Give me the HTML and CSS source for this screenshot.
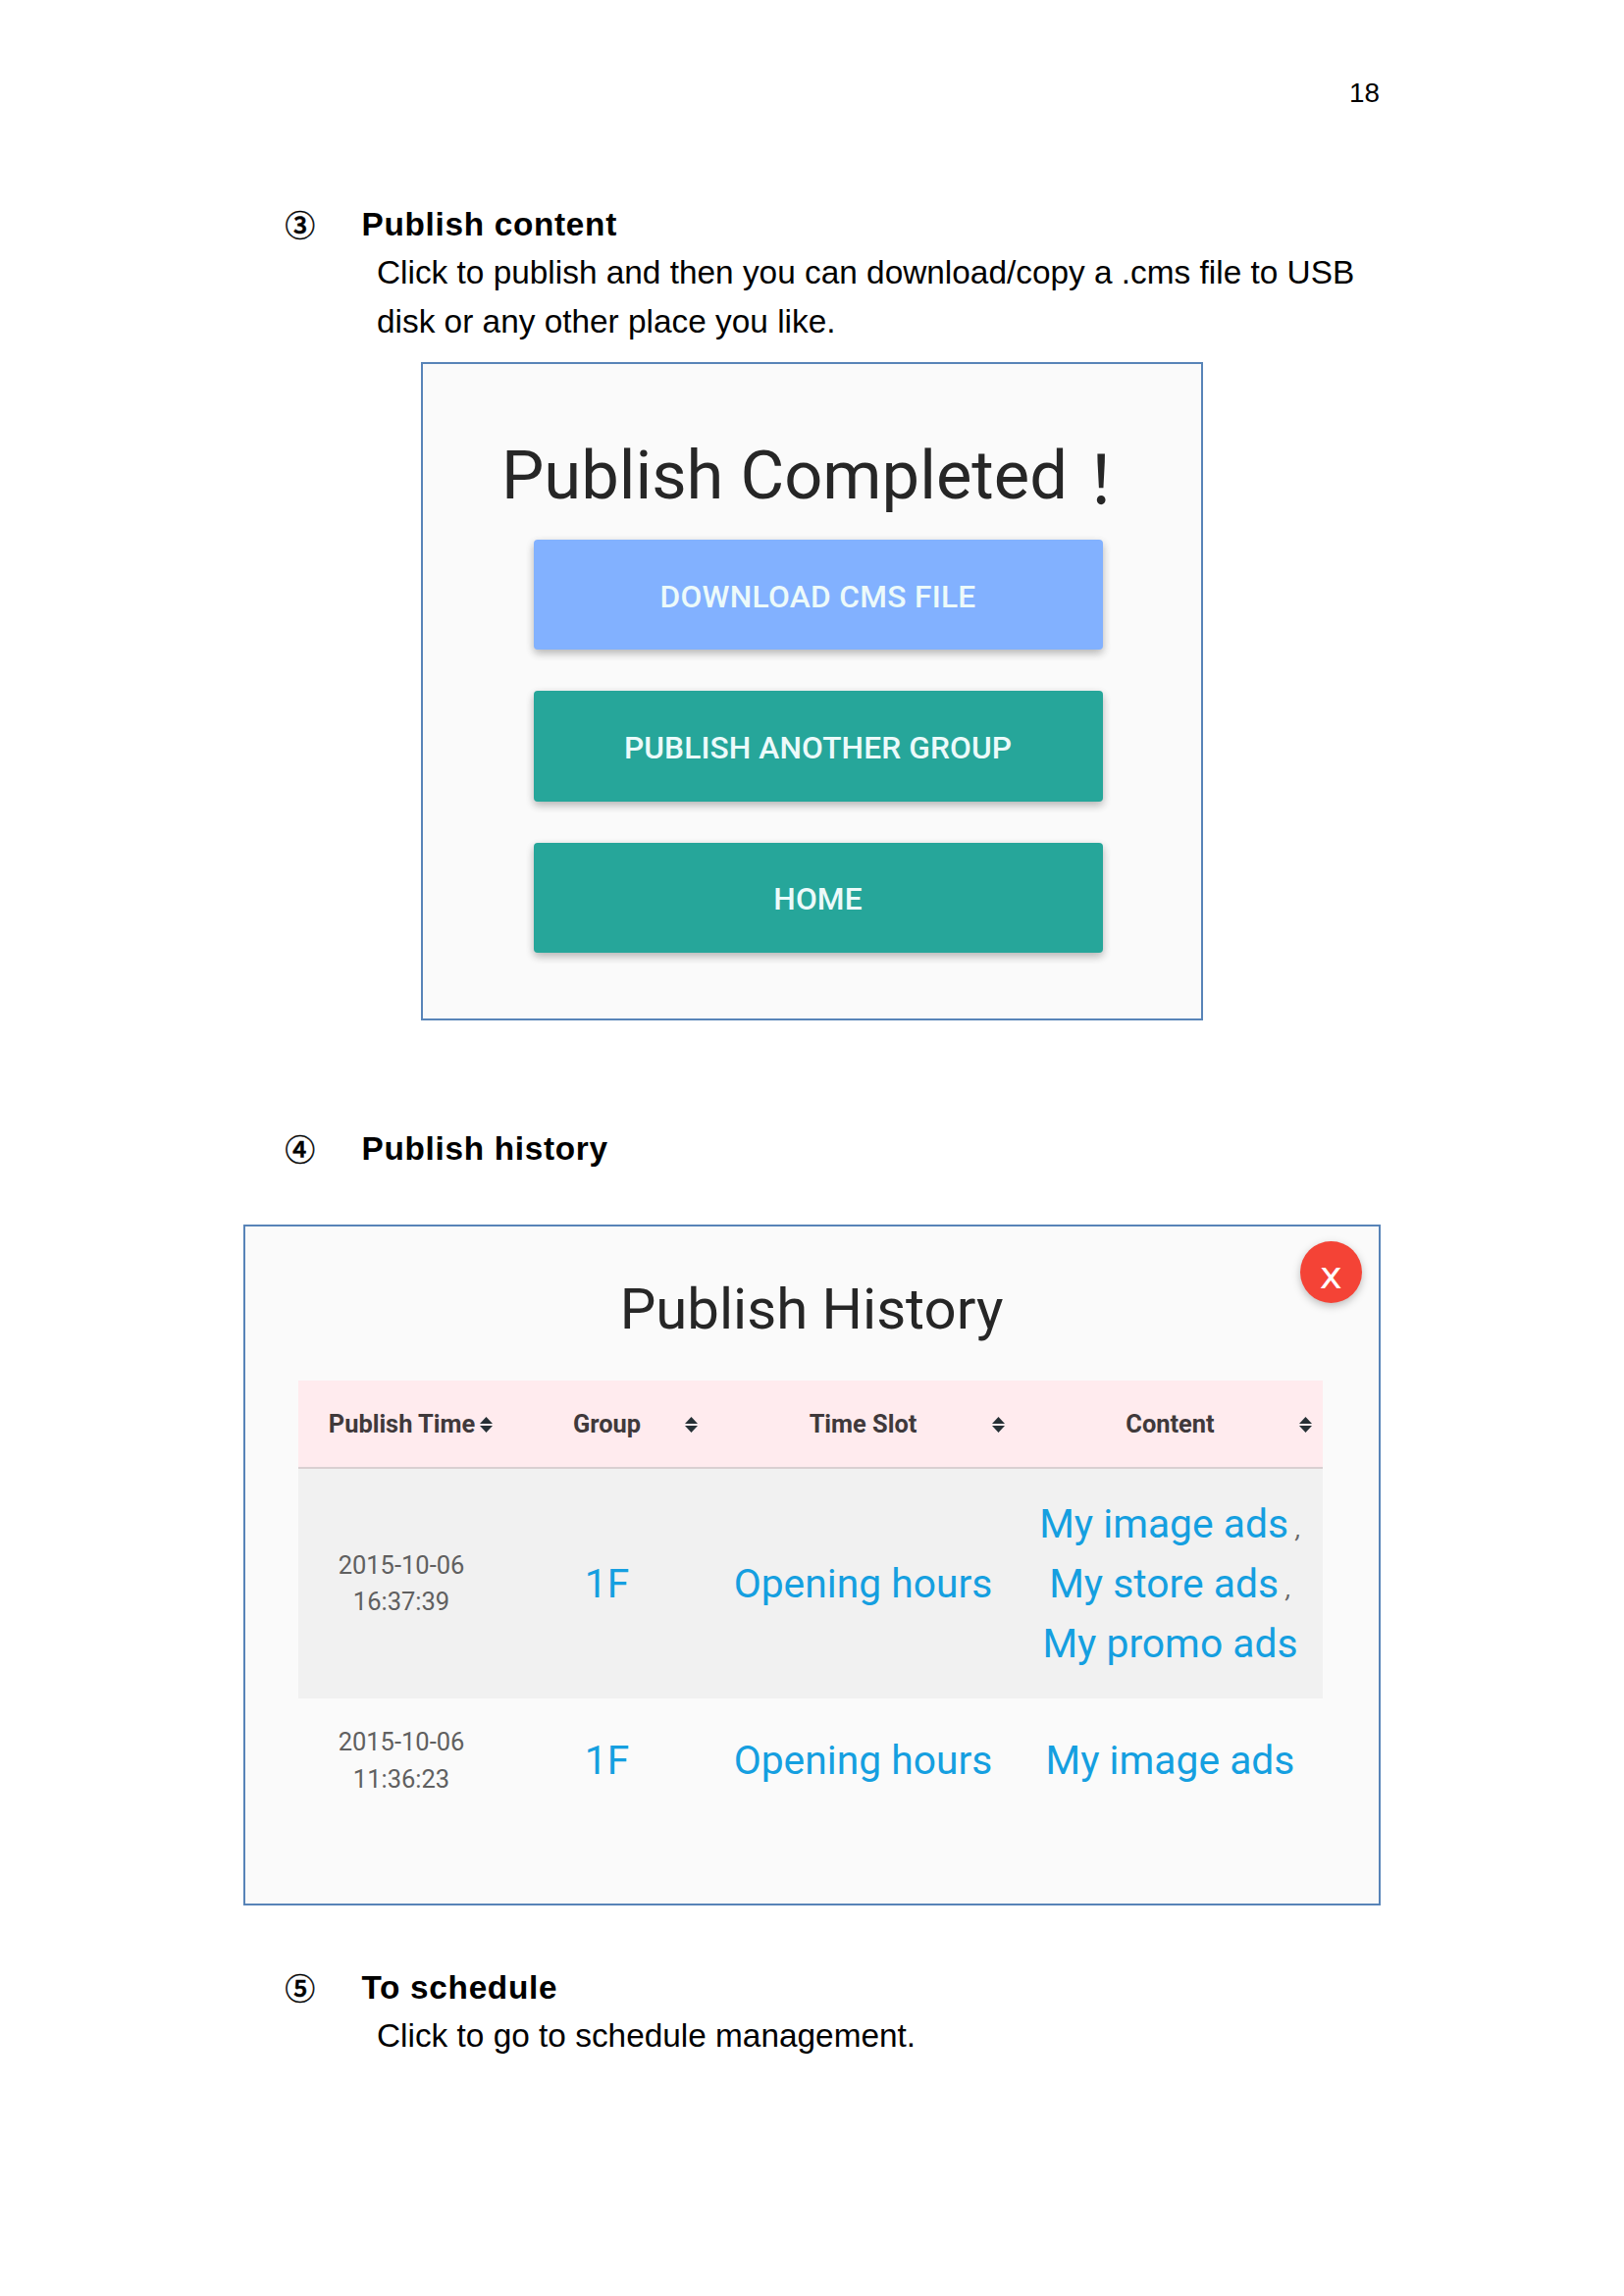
FILE: index.html
```html
<!DOCTYPE html>
<html lang="en">
<head>
<meta charset="utf-8">
<title>Publish content</title>
<link rel="stylesheet" href="styles.css">
</head>
<body>
<main class="page">
  <header class="page-number">18</header>

  <section class="step">
    <h2 class="step-title"><span class="step-mark">③</span>Publish content</h2>
    <p class="step-text">Click to publish and then you can download/copy a .cms file to USB<br>disk or any other place you like.</p>
    <div class="panel panel-completed">
      <h3 class="completed-title">Publish Completed<span class="bang">！</span></h3>
      <div class="actions">
        <a class="button button-blue">DOWNLOAD CMS FILE</a>
        <a class="button">PUBLISH ANOTHER GROUP</a>
        <a class="button">HOME</a>
      </div>
    </div>
  </section>

  <section class="step step-history">
    <h2 class="step-title"><span class="step-mark">④</span>Publish history</h2>
    <div class="panel panel-history">
      <a class="close">x</a>
      <h3 class="history-title">Publish History</h3>
      <div class="table">
        <div class="row head">
          <div class="cell">Publish Time<svg class="sort" viewBox="0 0 13 16"><path d="M6.5 0L13 7H0zM0 9H13L6.5 16z"/></svg></div>
          <div class="cell">Group<svg class="sort" viewBox="0 0 13 16"><path d="M6.5 0L13 7H0zM0 9H13L6.5 16z"/></svg></div>
          <div class="cell">Time Slot<svg class="sort" viewBox="0 0 13 16"><path d="M6.5 0L13 7H0zM0 9H13L6.5 16z"/></svg></div>
          <div class="cell">Content<svg class="sort" viewBox="0 0 13 16"><path d="M6.5 0L13 7H0zM0 9H13L6.5 16z"/></svg></div>
        </div>
        <div class="row striped">
          <div class="cell date">2015-10-06<br>16:37:39</div>
          <div class="cell link">1F</div>
          <div class="cell link">Opening hours</div>
          <div class="cell link"><span>My image ads<i class="comma">,</i></span><span>My store ads<i class="comma">,</i></span><span>My promo ads</span></div>
        </div>
        <div class="row">
          <div class="cell date">2015-10-06<br>11:36:23</div>
          <div class="cell link">1F</div>
          <div class="cell link">Opening hours</div>
          <div class="cell link">My image ads</div>
        </div>
      </div>
    </div>
  </section>

  <section class="step step-schedule">
    <h2 class="step-title"><span class="step-mark">⑤</span>To schedule</h2>
    <p class="step-text">Click to go to schedule management.</p>
  </section>
</main>
</body>
</html>
```
FILE: styles.css
```css
* { box-sizing: border-box; }

body {
  margin: 0;
  background: #fff;
  color: #000;
  font-family: "Liberation Sans", Arial, sans-serif;
}

h2, h3, p { margin: 0; }

.page {
  width: 1655px;
  height: 2340px;
  padding: 79px 248px 0;
}

.page-number {
  height: 32px;
  padding-right: 1px;
  font-size: 27.8px;
  line-height: 32px;
  text-align: right;
}

.step { margin-top: 93px; }
.step-history { margin-top: 106px; }
.step-schedule { margin-top: 59px; }

.step-title {
  display: flex;
  height: 49px;
  padding-left: 42.5px;
  font-size: 33.33px;
  font-weight: 700;
  line-height: 49px;
  letter-spacing: 0.7px;
}

.step-mark {
  width: 78px;
  font-family: "Noto Sans CJK SC", sans-serif;
  font-size: 30.6px;
  font-weight: 500;
  line-height: 48px;
  letter-spacing: 0;
  -webkit-text-stroke: 0.5px #000;
}

.step-text {
  padding-left: 136px;
  font-size: 33.38px;
  line-height: 49.8px;
  white-space: nowrap;
}

.panel {
  border: 2px solid #5884b8;
  background: #fafafa;
  font-family: Roboto, sans-serif;
}

.panel-completed {
  width: 797px;
  height: 671px;
  margin: 16px 0 0 181px;
  padding: 74px 0 0 80px;
}

.completed-title {
  height: 105.5px;
  color: #262626;
  font-size: 68.7px;
  font-weight: 400;
  line-height: 80px;
  white-space: nowrap;
}

.bang {
  margin-left: 17px;
  font-family: "Noto Sans CJK SC", sans-serif;
  font-weight: 400;
  line-height: 0;
  vertical-align: -6px;
}

.actions {
  display: flex;
  flex-direction: column;
  gap: 42px;
  padding-left: 32.5px;
}

.button {
  display: flex;
  align-items: center;
  justify-content: center;
  width: 580px;
  height: 112.4px;
  padding-top: 3.5px;
  border-radius: 4px;
  background: #26a69a;
  box-shadow: 0 4px 8px rgba(0, 0, 0, 0.2), 0 3px 10px rgba(0, 0, 0, 0.1);
  color: #ecfafa;
  font-size: 31.7px;
  font-weight: 500;
  letter-spacing: 0.1px;
}

.button-blue {
  background: #82b1ff;
  letter-spacing: 0.3px;
}

.panel-history {
  position: relative;
  width: 1159px;
  height: 694px;
  margin-top: 53px;
  padding: 49px 55px 0 54px;
}

.close {
  position: absolute;
  top: 15px;
  right: 17px;
  width: 63.5px;
  height: 63.5px;
  border-radius: 50%;
  background: #f44336;
  box-shadow: 0 3px 8px rgba(0, 0, 0, 0.25);
  color: #fff;
  font-family: "DejaVu Sans", sans-serif;
  font-size: 39px;
  line-height: 69px;
  text-align: center;
}

.history-title {
  height: 108px;
  color: #262626;
  font-size: 58.1px;
  font-weight: 400;
  line-height: 70px;
  text-align: center;
}

.row {
  display: grid;
  grid-template-columns: 209px 209px 313px 313px;
  width: 1044px;
  height: 127px;
}

.row.head {
  height: 90px;
  border-bottom: 2px solid #dacfd1;
  background: #ffebee;
  color: #40393b;
  font-size: 25.4px;
  font-weight: 700;
}

.row.striped {
  height: 234px;
  background: #f1f1f1;
}

.cell {
  position: relative;
  display: flex;
  flex-direction: column;
  align-items: center;
  justify-content: center;
  padding-left: 2px;
}

.head .cell { padding-top: 1px; }

.sort {
  position: absolute;
  top: 37px;
  right: 11px;
  width: 13px;
  height: 16px;
  fill: #263035;
}

.date {
  padding-left: 1px;
  padding-top: 1px;
  color: #606060;
  font-size: 25.5px;
  line-height: 37.4px;
  text-align: center;
}

.link {
  padding-top: 1px;
  color: #159fe0;
  font-size: 40.8px;
  line-height: 61px;
}

.link span { height: 61px; }

.comma {
  margin-left: 8px;
  color: #666;
  font-size: 25px;
  line-height: 1;
}
```
